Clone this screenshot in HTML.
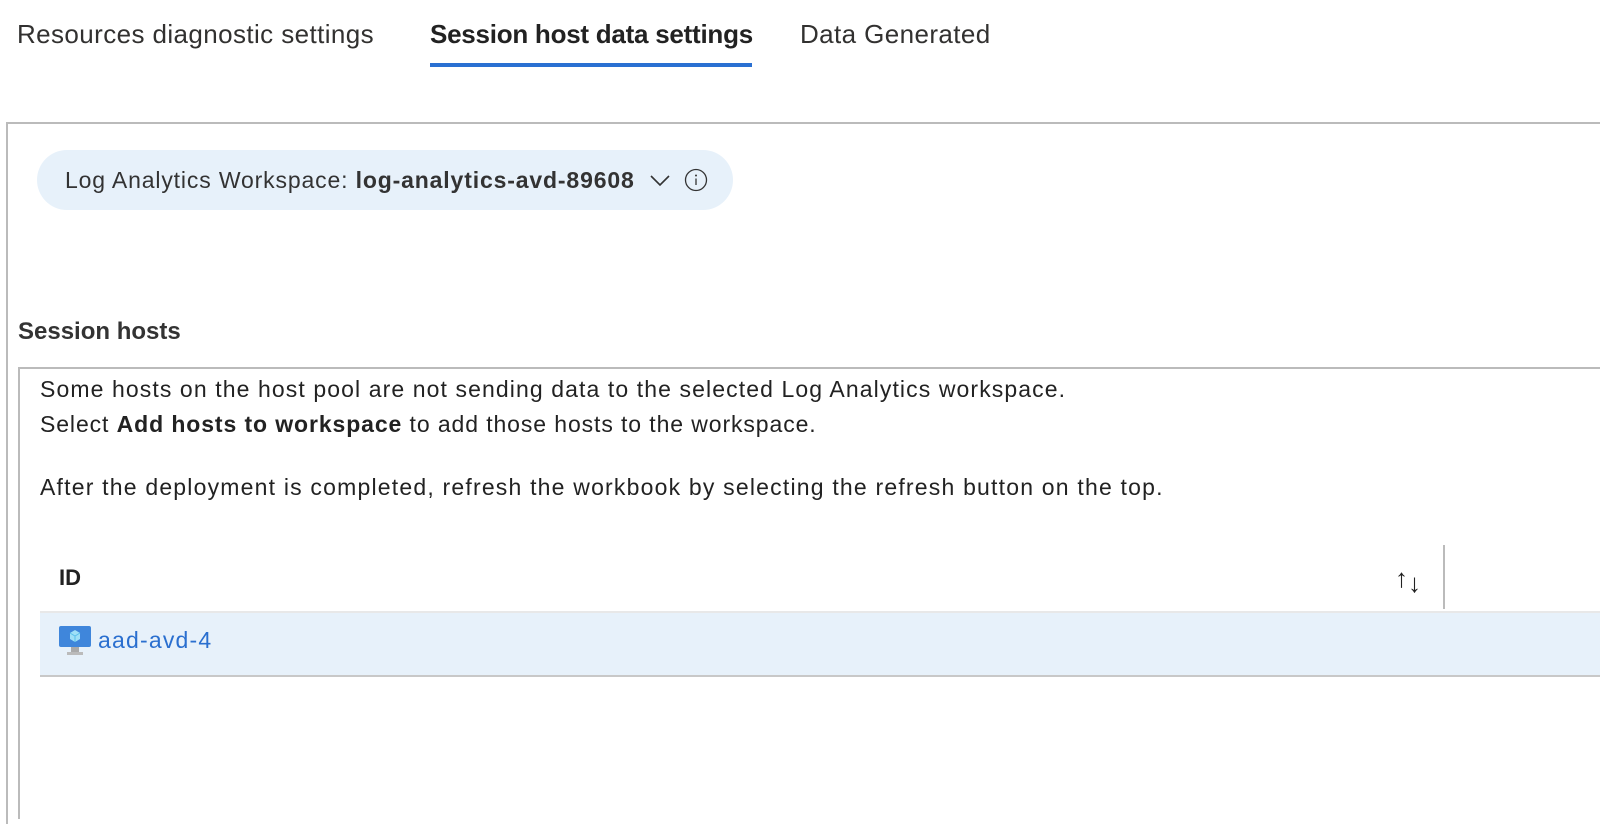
<!DOCTYPE html>
<html><head><style>
body{margin:0;width:1600px;height:810px;background:#fff;font-family:"Liberation Sans",sans-serif;color:#222;position:relative;overflow:hidden}
.a{position:absolute;white-space:nowrap}
.t{font-size:23px;letter-spacing:0.85px}
</style></head><body>
<div class="a" style="left:17px;top:19px;font-size:26px;letter-spacing:0.4px;color:#323130">Resources diagnostic settings</div>
<div class="a" style="left:430px;top:19px;font-size:26px;font-weight:bold;color:#222;letter-spacing:-0.25px">Session host data settings</div>
<div class="a" style="left:430px;top:63px;width:322px;height:4px;background:#2a70d2"></div>
<div class="a" style="left:800px;top:19px;font-size:26px;letter-spacing:0.4px;color:#323130">Data Generated</div>

<div class="a" style="left:6px;top:122px;width:1600px;height:700px;border-top:2px solid #bbb;border-left:2px solid #bbb"></div>
<div class="a" style="left:37px;top:150px;width:696px;height:60px;border-radius:30px;background:#e7f1fa"></div>
<div class="a t" style="left:65px;top:167px;color:#333">Log Analytics Workspace: <b>log-analytics-avd-89608</b></div>
<svg class="a" style="left:648px;top:170px" width="24" height="20"><path d="M3 6 L12 15 L21 6" fill="none" stroke="#333" stroke-width="1.6"/></svg>
<svg class="a" style="left:684px;top:168px" width="26" height="26"><circle cx="12" cy="12" r="10.5" fill="none" stroke="#333" stroke-width="1.3"/><circle cx="12" cy="7.5" r="1" fill="#333"/><path d="M12 10.5 V17" stroke="#333" stroke-width="1.3"/></svg>

<div class="a" style="left:18px;top:318px;font-size:24px;font-weight:bold;color:#333">Session hosts</div>
<div class="a" style="left:18px;top:367px;width:1600px;height:450px;border-top:2px solid #bbb;border-left:2px solid #bbb"></div>
<div class="a t" style="left:40px;top:372px;line-height:35px;color:#222;letter-spacing:1.1px">Some hosts on the host pool are not sending data to the selected Log Analytics workspace.<br><span style="letter-spacing:0.9px">Select <b>Add hosts to workspace</b> to add those hosts to the workspace.</span></div>
<div class="a t" style="left:40px;top:474px;color:#222;letter-spacing:1.2px">After the deployment is completed, refresh the workbook by selecting the refresh button on the top.</div>

<div class="a" style="left:59px;top:565px;font-size:22px;font-weight:bold;color:#222">ID</div>
<div class="a" style="left:1395px;top:563px;font-size:26px;color:#222">↑<span style="position:relative;top:5px">↓</span></div>
<div class="a" style="left:1443px;top:545px;width:2px;height:64px;background:#bbb"></div>
<div class="a" style="left:40px;top:611px;width:1560px;height:62px;background:#e7f1fa;border-top:2px solid #e8e8e8;border-bottom:2px solid #c8c8c8"></div>
<svg class="a" style="left:59px;top:626px" width="32" height="30"><rect x="0" y="0" width="32" height="21" rx="2" fill="#3f86db"/><rect x="12" y="21" width="8" height="5" fill="#aaa"/><rect x="8" y="26" width="16" height="3" fill="#bbb"/><path d="M16 4 L21 7 V13 L16 16 L11 13 V7 Z" fill="#9fe0f7"/><path d="M16 10 L21 7 M16 10 L11 7 M16 10 V16" stroke="#5ac0ea" stroke-width="1" fill="none"/></svg>
<div class="a" style="left:98px;top:627px;font-size:23px;letter-spacing:1.2px;color:#2a6fcf">aad-avd-4</div>
</body></html>
